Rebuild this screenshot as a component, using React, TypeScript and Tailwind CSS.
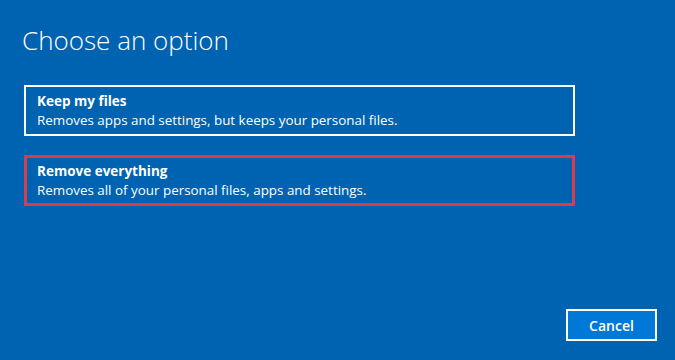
export default function App() {
  const options = [
    {
      title: "Keep my files",
      desc: "Removes apps and settings, but keeps your personal files.",
      border: "border-2 border-white pl-[11px] pt-[5px]",
    },
    {
      title: "Remove everything",
      desc: "Removes all of your personal files, apps and settings.",
      border: "border-[3px] border-[#dc3b48] pl-[10px] pt-[4px]",
    },
  ]

  return (
    <div className="flex flex-col h-[360px] w-[675px] bg-[#0063b1] text-white font-['Open_Sans','Noto_Sans',sans-serif] overflow-hidden">
      {/* Header */}
      <h1 className="pl-[22px] pt-[20px] text-[26px] leading-[40px] font-light">
        Choose an option
      </h1>

      {/* Options */}
      <div className="flex flex-col gap-[19px] pl-[24px] pt-[25px]">
        {options.map((opt) => (
          <div key={opt.title} className={`w-[551px] h-[51px] ${opt.border}`}>
            <div className="text-[13.5px] leading-[19px] font-bold">{opt.title}</div>
            <div className="text-[13.4px] leading-[19px]">{opt.desc}</div>
          </div>
        ))}
      </div>

      {/* Footer */}
      <div className="mt-auto flex justify-end pr-[18px] pb-[19px]">
        <button className="w-[91px] h-[32px] bg-[#0078d7] border-2 border-white text-[14px] font-semibold">
          Cancel
        </button>
      </div>
    </div>
  )
}
